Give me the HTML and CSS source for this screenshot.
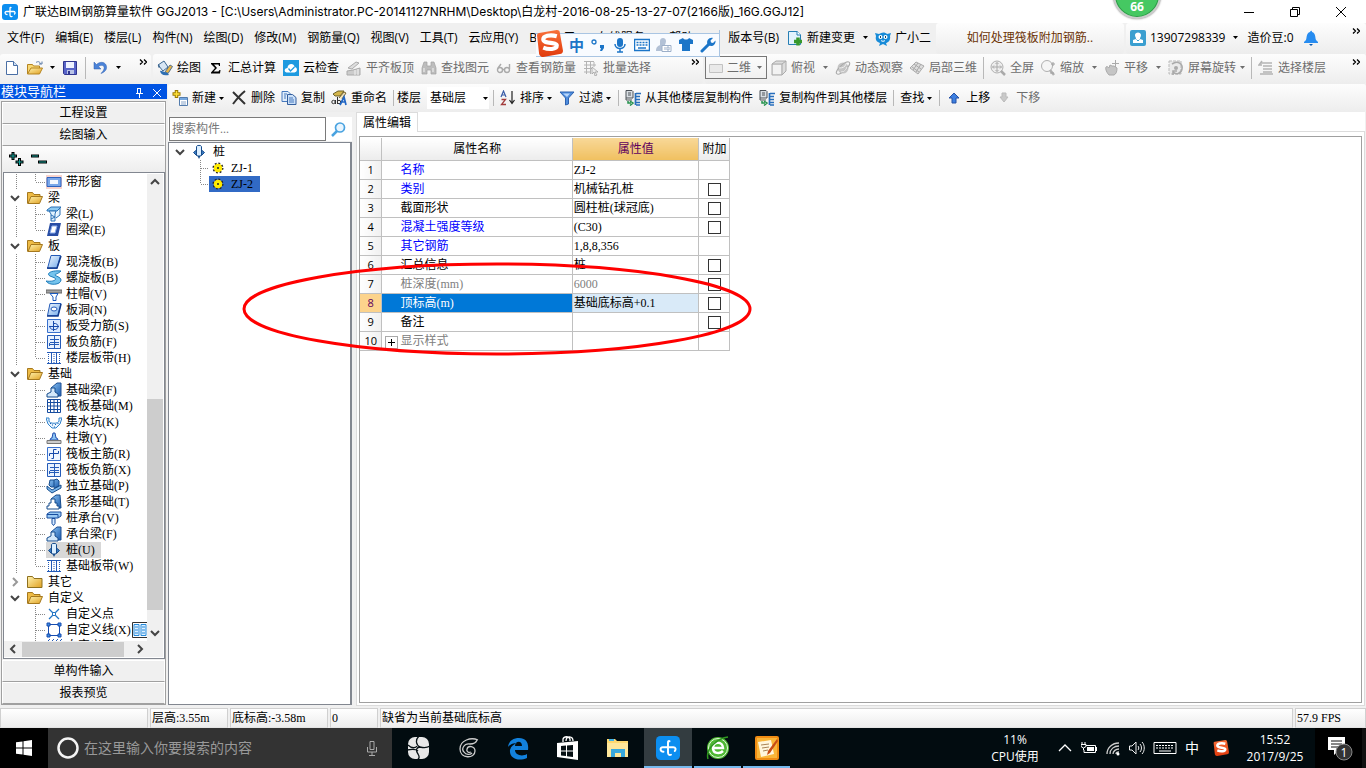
FILE: index.html
```html
<!DOCTYPE html>
<html lang="zh-CN">
<head>
<meta charset="utf-8">
<title>广联达BIM钢筋算量软件 GGJ2013</title>
<link rel="stylesheet" href="styles.css">
</head>
<body>
<svg class="defs" aria-hidden="true">
  <defs>
    <linearGradient id="gFold" x1="0" y1="0" x2="1" y2="1"><stop offset="0" stop-color="#fff3b0"/><stop offset="1" stop-color="#e0a020"/></linearGradient>
    <linearGradient id="gBlue" x1="0" y1="0" x2="1" y2="1"><stop offset="0" stop-color="#f4faff"/><stop offset="1" stop-color="#6fa8ea"/></linearGradient>
    <linearGradient id="gDeep" x1="0" y1="0" x2="1" y2="1"><stop offset="0" stop-color="#8cc4f4"/><stop offset="1" stop-color="#1c5cae"/></linearGradient>
    <linearGradient id="gSogou" x1="0" y1="0" x2="0" y2="1"><stop offset="0" stop-color="#f8703a"/><stop offset="1" stop-color="#e03a0c"/></linearGradient>
  </defs>
  <symbol id="caret" viewBox="0 0 5 3"><path d="M0 0h5L2.500 3z" fill="currentColor"/></symbol>
  <symbol id="more" viewBox="0 0 8 6"><path d="M1 .5 3.500 3 1 5.500M5 .5 7.500 3 5 5.500" fill="none" stroke="#000" stroke-width="1.300"/></symbol>
  <symbol id="app" viewBox="0 0 16 16"><rect width="16" height="16" rx="3" fill="#0c8ef0"/><path d="M9 3.500C8.300 3.200 8 3.500 8 4.500v6.500c0 1.500 1 2 2 1.500M5 10.500C2.500 10.500 2.500 7.500 4.500 7.500h7c1.700 0 2 1.500 1 2.500" fill="none" stroke="#fff" stroke-width="1.300" stroke-linecap="round"/></symbol>
  <symbol id="new" viewBox="0 0 16 16"><path d="M2.500 1.500h7l4 4v9h-11z" fill="#fff" stroke="#4a6fa5"/><path d="M9.500 1.500v4h4" fill="#cfe0f5" stroke="#4a6fa5"/></symbol>
  <symbol id="open" viewBox="0 0 16 16"><path d="M.5 14V4.500h5l1 1.500h6v3" fill="#f8d874" stroke="#b58420"/><path d="M.5 14 4 8h11.500l-3 6z" fill="url(#gFold)" stroke="#b58420"/><path d="M9 2.500c2-1.500 4-1 4.500 1.500M12 4h3V1.500" fill="none" stroke="#5b7ba8"/></symbol>
  <symbol id="save" viewBox="0 0 16 16"><path d="M1.500 1.500h13v13h-12l-1-1z" fill="#5864c8" stroke="#30358e"/><path d="M4 2h8v6H4z" fill="#eef2ff"/><path d="M5 10h7v4H5z" fill="#b9c3e6"/><path d="M6 11h2v3H6z" fill="#30358e"/></symbol>
  <symbol id="undo" viewBox="0 0 16 16"><path d="M1 2v7h7L5.500 6.500C9 4 12 6 11 9c-.5 2-2 3-3 4.500 4-1.500 6-4 5.500-7C13 2.500 8 .5 3.500 4.500z" fill="#4b83d8" stroke="#2e5fae" stroke-width=".5"/></symbol>
  <symbol id="paint" viewBox="0 0 16 16"><path d="M1 5 7 1l4 6-5 4z" fill="#d8e6f4" stroke="#3c6690"/><path d="M2 4c-2 3 0 5 1 3" fill="#3c6690"/><path d="m8 12 5-7 2.500 1.500-4.500 7-4 1z" fill="#e9b544" stroke="#55708c"/><path d="M3 11c2-1 4 2 7 1l2 3c-5 1-8 0-9-4z" fill="#2f6fb2"/></symbol>
  <symbol id="sigma" viewBox="0 0 16 16"><path d="M3 3h9v3h-1l-.5-1.500H6L9 8l-3.500 3.500h5L11.500 10h1l-.5 3.500H3v-1L7 8 3 4z" fill="#000"/></symbol>
  <symbol id="cloud" viewBox="0 0 16 16"><rect width="16" height="16" fill="#1d9ae0"/><path d="M3.500 12.500c-3-1-2-4.500 1-4.500 0-5 7-5 7-1 3 0 3.500 5 0 5.500z" fill="#fff"/><path d="m5.500 8.500 2 2.500 4-4" fill="none" stroke="#1d9ae0" stroke-width="1.300"/></symbol>
  <symbol id="flat" viewBox="0 0 16 16"><path d="m2 8 8-6 3 1-7 6z" fill="#ddd" stroke="#aaa"/><path d="M1 15v-4l6-1 7-2v7z" fill="#ccc" stroke="#aaa"/><path d="M9 10v5M12 9v6" stroke="#f2f2f2"/></symbol>
  <symbol id="binoc" viewBox="0 0 16 16"><path d="M3 2h3v4h4V2h3l2 6v6h-5v-4H6v4H1V8z" fill="#bdbdbd" stroke="#a2a2a2" stroke-width=".7"/><path d="M3 8v4M12 8v4" stroke="#f4f4f4"/></symbol>
  <symbol id="glasses" viewBox="0 0 16 16"><g fill="none" stroke="#aaa" stroke-width="1.400"><circle cx="4" cy="10" r="2.500"/><circle cx="11" cy="10" r="2.500"/><path d="M6.500 9.500h2M2 8l3-4M13.500 9V4"/></g></symbol>
  <symbol id="batch" viewBox="0 0 16 16"><path d="M1 1.500h10M1 5h12M1 8.500h8M1 12h7M3.500 1v13M7.500 1v13M11 2v5" fill="none" stroke="#b4b4b4"/><path d="m9 7 6 5h-3l2 3-2 1-1-4-2 2z" fill="#eee" stroke="#999" stroke-width=".7"/></symbol>
  <symbol id="rect2d" viewBox="0 0 16 16"><path d="M1.500 4.500h13v8h-13z" fill="#e9e9e9" stroke="#c2c2c2"/></symbol>
  <symbol id="cube" viewBox="0 0 16 16"><path d="m1 4 4-3h10v10l-4 4H1z" fill="#ddd" stroke="#aaa"/><path d="M1 4h10v11M11 4l4-3" fill="none" stroke="#aaa"/><path d="M2 5h8v9H2z" fill="#f2f2f2"/></symbol>
  <symbol id="orbit" viewBox="0 0 16 16"><circle cx="8" cy="8" r="5.500" fill="#c5c5c5"/><ellipse cx="8" cy="8" rx="8.500" ry="3" transform="rotate(-42 8 8)" fill="none" stroke="#aaa"/><path d="M4 8c4 0 6-1 7-4M6 12c3 0 5-2 6-5" fill="none" stroke="#eee"/></symbol>
  <symbol id="part3d" viewBox="0 0 16 16"><path d="m1 8 6-6 8 4-6 8z" fill="#ddd" stroke="#aaa"/><path d="m5 4 7 5M9 3l-5 7M12 4l-5 8M3 7l7 5" fill="none" stroke="#aaa"/></symbol>
  <symbol id="full" viewBox="0 0 16 16"><circle cx="7" cy="7" r="6" fill="#eee" stroke="#b0b0b0"/><path d="M7 2.500v9M2.500 7h9M5.500 4 7 2.500 8.500 4m-3 6L7 11.500 8.500 10M4 5.500 2.500 7 4 8.500m6-3L11.500 7 10 8.500" fill="none" stroke="#aaa"/><path d="m11 11 4 4" stroke="#aaa" stroke-width="2.500"/></symbol>
  <symbol id="zoom" viewBox="0 0 16 16"><circle cx="7" cy="6" r="5.500" fill="#f5f5f5" stroke="#b0b0b0"/><path d="m10 10 4 5" stroke="#b0b0b0" stroke-width="2.500"/><path d="M13 2v4M11 4h4M10 13h4" stroke="#a0a0a0"/></symbol>
  <symbol id="hand" viewBox="0 0 16 16"><path d="M2 7c1-1 2 0 3 1l1-3 2 1 2 0 3 2c0 4-1 6-3 7H5c-2-2-4-6-3-8z" fill="#c5c5c5" stroke="#aaa"/><path d="M11.500 0v7M8 3.500h7" stroke="#aaa"/></symbol>
  <symbol id="rotate" viewBox="0 0 16 16"><path d="M1 1h12v13H1z" fill="#eaeaea" stroke="#bbb" stroke-dasharray="3 1"/><path d="M4 4c6-4 11 0 10 5s-6 6-9 3m0 3v-4h4" fill="none" stroke="#aaa" stroke-width="1.600"/><circle cx="8" cy="8" r="2" fill="#aaa"/></symbol>
  <symbol id="floors" viewBox="0 0 16 16"><path d="M3 3h11M5 6h9M5 9h9M5 12h9M2 14h13M4 1 1 5h3" fill="none" stroke="#b4b4b4" stroke-width="1.500"/></symbol>
  <symbol id="change" viewBox="0 0 16 16"><path d="M1.500 1.500h9l3 3v10h-12z" fill="#e2f3fd" stroke="#267eb4"/><path d="M10 1v4h4" fill="#fff" stroke="#267eb4"/><path d="M11 7.500v8M7 11.500h8" stroke="#37992c" stroke-width="3.500"/></symbol>
  <symbol id="mascot" viewBox="0 0 16 16"><path d="M1 6 0 3l4 1c3-2 6-2 8 0l4-1-1 3c1 5-3 7-4 7l1 3-4-2-4 2 1-3c-3-1-5-3-4-7z" fill="#178bd8"/><circle cx="5.500" cy="7" r="2" fill="#fff"/><circle cx="10.500" cy="7" r="2" fill="#fff"/><path d="M5.500 6v2M10.500 6v2" stroke="#16435e"/><path d="M6 10.500c1 1 3 1 4 0" fill="none" stroke="#fff"/></symbol>
  <symbol id="user" viewBox="0 0 16 16"><rect width="16" height="16" rx="2" fill="#3b9fd0"/><path d="M5 5c0-3.500 6-3.500 6 0 0 2-1 2-1 4l3 1v3H3v-3l3-1c0-2-1-2-1-4z" fill="#fff"/><path d="m6.500 9.500 1.500 1.500 1.500-1.500" stroke="#3b9fd0" fill="none"/></symbol>
  <symbol id="bell" viewBox="0 0 16 16"><path d="M7 2c1-2 2-1 2 0 4 1 3 6 4 8l2 2v1H1v-1l2-2c1-2 0-7 4-8z" fill="#278cf0"/><path d="M6 14h4l-2 2z" fill="#0b5bb2"/></symbol>
  <symbol id="add" viewBox="0 0 16 16"><path d="M4.500 0v8M.5 4h8" stroke="#9a7900" stroke-width="3.500"/><path d="M4.500 1v6M1.500 4h6" stroke="#ffe13b" stroke-width="1.500"/><path d="M7.500 7.500h8v8h-8z" fill="#fff" stroke="#537cad"/><path d="M8 8h7v2H8z" fill="#76a8e0"/><path d="M9 12h5M9 14h5" stroke="#88a4c8"/></symbol>
  <symbol id="del" viewBox="0 0 16 16"><path d="m2 2 12 12M14 1C9 5 5 10 2 14" fill="none" stroke="#333" stroke-width="2"/></symbol>
  <symbol id="copy" viewBox="0 0 16 16"><path d="M1 1.500h6l3 3v7H1z" fill="#e0edfb" stroke="#4779bd"/><path d="M6.500 4.500h5l3.500 3v7H6.500z" fill="#cbe0f8" stroke="#345f9e"/><path d="M8 8h4M8 10h5M8 12h5M3 4h3M3 6h2M3 8h2" stroke="#4779bd"/></symbol>
  <symbol id="rename" viewBox="0 0 16 16"><path d="m2 4 5-3h6l-4 5H4z" fill="#d5b64b" stroke="#6c622b"/><path d="m8 8 5-6 2 1-4 6" fill="#eee3bd" stroke="#7a642d"/><g fill="none" stroke="#333"><circle cx="2.500" cy="12" r="1.700"/><path d="M4.500 10v4M6.500 7v7"/><circle cx="8" cy="12" r="1.700"/></g><path d="m9 15 4-8 2 8M11 12h4" fill="none" stroke="#2267c5" stroke-width="1.700"/></symbol>
  <symbol id="sort" viewBox="0 0 16 16"><path d="M1 7 3.500 1 6 7M2 5h3" fill="none" stroke="#3a5da8" stroke-width="1.200"/><path d="M1.500 9.500h4l-4 5h4.500" fill="none" stroke="#a33d3d" stroke-width="1.300"/><path d="M12 1v12m-2.500-3 2.500 3.500 2.500-3.500" fill="none" stroke="#222" stroke-width="1.200"/></symbol>
  <symbol id="filter" viewBox="0 0 16 16"><path d="M1 2h14l-5.500 6v6l-3 1V8z" fill="#4f8ede" stroke="#2d62b0"/><path d="M4 3.500h7L8 7z" fill="#b8d6fb"/></symbol>
  <symbol id="floorcopy" viewBox="0 0 16 16"><path d="M1 .5h6l1 1V8H1z" fill="#d9dee3" stroke="#4c5258"/><path d="M3 3h3M3 5h3M1 8v2h6" stroke="#4c5258" fill="none"/><path d="M3 11v2h3M5 11l3 2-3 2.500" fill="none" stroke="#25924d" stroke-width="1.500"/><path d="M11 3.500h5M11 6.500h4M11 9.500h4M11 12.500h4M11 15h4M10.500 3v12" fill="none" stroke="#276ebc" stroke-width="1.700"/></symbol>
  <symbol id="up" viewBox="0 0 16 16"><path d="m8 3 5 5h-3v5H6V8H3z" fill="#3d7fe0" stroke="#2450a4"/></symbol>
  <symbol id="down" viewBox="0 0 16 16"><path d="m8 12 4-5h-2V3H6v4H4z" fill="#c9c9c9" stroke="#bbb"/></symbol>
  <symbol id="chev" viewBox="0 0 10 10"><path d="m1 3 4 4 4-4" fill="none" stroke="currentColor" stroke-width="2"/></symbol>
  <symbol id="folder" viewBox="0 0 16 16"><path d="M.5 13.500v-11h5l1.500 2h6v3" fill="#eebb45" stroke="#a5781e"/><path d="m1 13.500 3-7h11.500l-3 7z" fill="url(#gFold)" stroke="#a5781e"/></symbol>
  <symbol id="folderc" viewBox="0 0 16 16"><path d="M.5 13.500v-11h5l1.500 2h8v9z" fill="url(#gFold)" stroke="#8e701e"/></symbol>
  <symbol id="win" viewBox="0 0 16 16"><path d="M0 1h16v14H0z" fill="#f8d3cc"/><path d="M1 3.500h14v9H1z" fill="#7ba7e8" stroke="#2d62c0"/><path d="M4 6h8v4H4z" fill="#f4f8ff"/></symbol>
  <symbol id="beam" viewBox="0 0 16 16"><path d="m1 4 4-3h10l-4 4H1z" fill="#8bc9f2" stroke="#2a70b5"/><path d="M3 5h7l-1 3v7H5V8zM11 5l3-3v7l-4 3" fill="#e1f2ff" stroke="#2a70b5"/><path d="m5 9 4 2-4 2" stroke="#2a70b5" fill="none"/></symbol>
  <symbol id="ring" viewBox="0 0 16 16"><path d="M4 1h11l-3 13H1z" fill="#284da4"/><path d="M6 4h5l-2 7H4z" fill="#fff" stroke="#8aacec"/></symbol>
  <symbol id="slab" viewBox="0 0 16 16"><path d="M5 1.500h9.500L11 14.500H1.500z" fill="url(#gBlue)" stroke="#245bb8"/><path d="M1 14h10l4-12" fill="none" stroke="#143d8e" stroke-width="1.500"/></symbol>
  <symbol id="spiral" viewBox="0 0 16 16"><path d="M15 1C4 0 0 4 4 6l5 2c2 2-2 4-9 3 3 5 15 4 15-1 0-3-6-4-6-5s3-1 6-4z" fill="#75c4ed" stroke="#1f7dbb"/></symbol>
  <symbol id="cap" viewBox="0 0 16 16"><path d="M0 4h16v3H0z" fill="#a2a2a2" stroke="#666"/><path d="M4 7.500h8L10 11v3.500H7V11z" fill="#fff" stroke="#1b59bd"/></symbol>
  <symbol id="hole" viewBox="0 0 16 16"><path d="M4 1.500h11L12 13.500H1.500z" fill="url(#gBlue)" stroke="#245bb8"/><path d="M1 14h11l3-12" fill="none" stroke="#143d8e" stroke-width="1.500"/><ellipse cx="8" cy="7" rx="3" ry="2" fill="#fff" stroke="#245bb8"/></symbol>
  <symbol id="rebar" viewBox="0 0 16 16"><path d="M1.500 1.500h13v13h-13z" fill="#d9e9ff" stroke="#3871ce"/><path d="M7.500 3v10M3 8.500h10M7.500 5.500c6-1 6 7 0 6-3 0-4-2-3-3" fill="none" stroke="#174aab"/></symbol>
  <symbol id="neg" viewBox="0 0 16 16"><path d="M1.500 1.500h13v13h-13z" fill="#e8f2ff" stroke="#245bb8"/><path d="M8.500 2v12M4 5.500h9M3 10.500h10M4 8.500h9M3.500 9v3" fill="none" stroke="#245bb8"/></symbol>
  <symbol id="strip" viewBox="0 0 16 16"><path d="M1 2.500h14M1 13.500h14M5.500 3v10M10.500 3v10" stroke="#245bb8"/><path d="M2.500 4v9M8 4v9M13.500 4v9" stroke="#245bb8" stroke-dasharray="1 1"/></symbol>
  <symbol id="fbeam" viewBox="0 0 16 16"><path d="m5 6 6-5h4v13h-4z" fill="url(#gDeep)" stroke="#1c4f94"/><path d="M5 6h4v4l3 2v3H1v-3l4-2z" fill="#d3e8fa" stroke="#174c8c"/></symbol>
  <symbol id="raft" viewBox="0 0 16 16"><path d="M1.500 1.500h13v13h-13z" fill="#fff" stroke="#174c9e"/><path d="M4.500 4.500h7v7h-7zM8 2v12M2 8h12M4.500 2v12M11.500 2v12M2 4.500h12M2 11.500h12" fill="none" stroke="#174c9e"/></symbol>
  <symbol id="pit" viewBox="0 0 16 16"><path d="M0 4h3v3c0 3 10 3 10 0V4h3l-2 6-4 4H6l-4-4z" fill="#e8f5ff" stroke="#3182cc"/><path d="M6 11h1M9 10.500h1M8 13h1M4 9.500h1M11.500 9.500h1" stroke="#1c5cae"/></symbol>
  <symbol id="pier" viewBox="0 0 16 16"><path d="M7 3h2l1 5h1l1 2H4l1-2h1z" fill="#8cc4f4" stroke="#2450ae"/><path d="M1 10.500h14v3H1z" fill="#ccc" stroke="#777"/></symbol>
  <symbol id="mrebar" viewBox="0 0 16 16"><path d="M1.500 1.500h13v13h-13z" fill="#eef5ff" stroke="#3871ce"/><path d="M7.500 3.500v9h-2M3.500 10V7.500h9V5M7.500 3.500h3" fill="none" stroke="#174aab"/></symbol>
  <symbol id="indep" viewBox="0 0 16 16"><path d="m1 8 5 4 9-5v3l-9 5-5-4z" fill="#7db8ec" stroke="#174c8c"/><path d="M4 2h4v7H5L3 7zM8 2l3-1 2 2v5l-5 2" fill="url(#gDeep)" stroke="#174c8c"/></symbol>
  <symbol id="stripf" viewBox="0 0 16 16"><path d="m5 5 5-4h4l1 13h-4z" fill="url(#gDeep)" stroke="#174c8c"/><path d="M5 5h4v4h2v3h2v3H1v-3h2V9h2z" fill="#fff" stroke="#174c8c"/></symbol>
  <symbol id="pcap" viewBox="0 0 16 16"><path d="M1 4 4 2h11v4l-3 2H1z" fill="#9bcaf5" stroke="#174c9e"/><path d="M1 4.500h11v3" fill="none" stroke="#174c9e"/><path d="M6 8.500h3v5l-1.500 2-1.500-2z" fill="#d8ebff" stroke="#174c9e"/></symbol>
  <symbol id="pile" viewBox="0 0 16 16"><path d="m2.500 8.500 3-2.500h5l3 2.500-3 3h-5z" fill="#3a7cc4" stroke="#174c8c"/><path d="M5.500 2.500c0-1.500 5-1.500 5 0V11l-1 1h-3l-1-1z" fill="#dcefff" stroke="#174c8c"/><path d="M6.500 12h3L8 15z" fill="#174c8c"/></symbol>
  <symbol id="point" viewBox="0 0 16 16"><path d="m3 3 10 10M13 3 3 13" stroke="#2375c5" stroke-width="1.300"/><path d="M6.500 6.500h3v3h-3z" fill="#fff" stroke="#2375c5"/></symbol>
  <symbol id="line" viewBox="0 0 16 16"><path d="M2.500 2.500h11v11h-11z" fill="#fff" stroke="#174cb0"/><path d="M1 1h3v3H1zM12 1h3v3h-3zM1 12h3v3H1zM12 12h3v3h-3z" fill="#3f8de0" stroke="#174cb0"/></symbol>
  <symbol id="hatch" viewBox="0 0 16 16"><path d="m0 5 4-4m0 4 4-4m0 4 4-4m0 4 4-4" stroke="#245bb8"/></symbol>
  <symbol id="pages" viewBox="0 0 16 16"><path d="M.5.500h15v15H.5z" fill="#fff" stroke="#333"/><path d="M2 2.500h5v11H2zM9 2.500h5v11H9z" fill="#dff0ff" stroke="#2489da"/><path d="M3 5h3M3 8h3M3 11h3M10 5h3M10 8h3M10 11h3" stroke="#2489da"/></symbol>
  <symbol id="gear" viewBox="0 0 16 16"><circle cx="8" cy="8" r="4" fill="#fff000"/><circle cx="8" cy="8" r="4.500" fill="none" stroke="#222" stroke-width="2" stroke-dasharray="1.800 1.700"/><circle cx="8" cy="8" r="3.500" fill="none" stroke="#ffe600" stroke-width="1.500"/><circle cx="8" cy="8" r="1" fill="#222"/></symbol>
  <symbol id="sogou" viewBox="0 0 26 26"><path d="M1 5Q1 3 3 3L20 0q3 0 3 3l3 17q0 3-3 3L7 26q-3 0-4-3z" fill="url(#gSogou)"/><path d="M20 6C13 4 7 6 7 9c0 5 13 2 13 6 0 4-8 4-13 2" fill="none" stroke="#fff" stroke-width="4"/></symbol>
</svg>

<header class="titlebar">
  <svg class="ic"><use href="#app"/></svg>
  <h1 class="title">广联达BIM钢筋算量软件 GGJ2013 - [C:\Users\Administrator.PC-20141127NRHM\Desktop\白龙村-2016-08-25-13-27-07(2166版)_16G.GGJ12]</h1>
  <div class="winctl">
    <button aria-label="最小化"><svg class="ic" viewBox="0 0 16 16"><path d="M3 8.500h10" stroke="#000"/></svg></button>
    <button aria-label="还原"><svg class="ic" viewBox="0 0 16 16"><path d="M3.500 5.500h7v7h-7zM5.500 5V3.500h7v7H11" fill="none" stroke="#000"/></svg></button>
    <button aria-label="关闭"><svg class="ic" viewBox="0 0 16 16"><path d="m3 3 10 10M13 3 3 13" stroke="#000"/></svg></button>
  </div>
</header>

<div class="menurow">
  <nav class="menu">
    <button>文件(F)</button><button>编辑(E)</button><button>楼层(L)</button><button>构件(N)</button><button>绘图(D)</button><button>修改(M)</button><button>钢筋量(Q)</button><button>视图(V)</button><button>工具(T)</button><button>云应用(Y)</button><button>BIM应用(I)</button><button>在线服务(S)</button><button>帮助(H)</button><button>版本号(B)</button>
  </nav>
  <div class="menuextra">
    <button class="tb"><svg class="ic"><use href="#change"/></svg>新建变更<svg class="caret"><use href="#caret"/></svg></button>
    <button class="tb"><svg class="ic"><use href="#mascot"/></svg>广小二</button>
  </div>
  <div class="band news"><a href="#">如何处理筏板附加钢筋..</a></div>
  <div class="band account">
    <button class="tb"><svg class="ic"><use href="#user"/></svg>13907298339<svg class="caret"><use href="#caret"/></svg></button>
    <span>造价豆:0</span>
    <button class="tb" aria-label="消息"><svg class="ic"><use href="#bell"/></svg></button>
    <svg class="more"><use href="#more"/></svg>
  </div>
</div>

<div class="toolrow">
  <div class="band files">
    <button class="tb" aria-label="新建"><svg class="ic"><use href="#new"/></svg></button>
    <button class="tb" aria-label="打开"><svg class="ic"><use href="#open"/></svg><svg class="caret"><use href="#caret"/></svg></button>
    <button class="tb" aria-label="保存"><svg class="ic"><use href="#save"/></svg></button>
    <i class="sep"></i>
    <button class="tb" aria-label="撤销"><svg class="ic"><use href="#undo"/></svg><svg class="caret"><use href="#caret"/></svg></button>
    <svg class="more"><use href="#more"/></svg>
  </div>
  <div class="band draw">
    <button class="tb"><svg class="ic"><use href="#paint"/></svg>绘图</button>
    <button class="tb"><svg class="ic"><use href="#sigma"/></svg>汇总计算</button>
    <button class="tb"><svg class="ic"><use href="#cloud"/></svg>云检查</button>
    <button class="tb off"><svg class="ic"><use href="#flat"/></svg>平齐板顶</button>
    <button class="tb off"><svg class="ic"><use href="#binoc"/></svg>查找图元</button>
    <button class="tb off"><svg class="ic"><use href="#glasses"/></svg>查看钢筋量</button>
    <button class="tb off"><svg class="ic"><use href="#batch"/></svg>批量选择</button>
    <svg class="more"><use href="#more"/></svg>
  </div>
  <div class="band view">
    <div class="combo dim"><svg class="ic"><use href="#rect2d"/></svg><select aria-label="视图维度" class="off"><option>二维</option></select><svg class="caret off"><use href="#caret"/></svg></div>
    <button class="tb off"><svg class="ic"><use href="#cube"/></svg>俯视<svg class="caret wide"><use href="#caret"/></svg></button>
    <button class="tb off"><svg class="ic"><use href="#orbit"/></svg>动态观察</button>
    <button class="tb off"><svg class="ic"><use href="#part3d"/></svg>局部三维</button>
    <i class="sep"></i>
    <button class="tb off"><svg class="ic"><use href="#full"/></svg>全屏</button>
    <button class="tb off"><svg class="ic"><use href="#zoom"/></svg>缩放<svg class="caret wide"><use href="#caret"/></svg></button>
    <button class="tb off"><svg class="ic"><use href="#hand"/></svg>平移<svg class="caret wide"><use href="#caret"/></svg></button>
    <button class="tb off"><svg class="ic"><use href="#rotate"/></svg>屏幕旋转<svg class="caret"><use href="#caret"/></svg></button>
    <i class="sep"></i>
    <button class="tb off"><svg class="ic"><use href="#floors"/></svg>选择楼层</button>
    <svg class="more"><use href="#more"/></svg>
  </div>
</div>

<main class="main">
  <aside class="nav">
    <div class="navhead"><h2>模块导航栏</h2>
      <button aria-label="固定"><svg class="ic" viewBox="0 0 16 16"><path d="M6.500 4v5M9.500 4v5M5 9.500h7M8.500 10v4M6 4.500h4" stroke="#fff" fill="none"/></svg></button>
      <button aria-label="关闭"><svg class="ic" viewBox="0 0 16 16"><path d="m4 5 8 8M12 5l-8 8" stroke="#fff"/></svg></button>
    </div>
    <div class="navbody">
      <button class="navbtn">工程设置</button>
      <button class="navbtn">绘图输入</button>
      <div class="navtools">
        <button aria-label="全部展开"><svg class="ic" viewBox="0 0 16 16"><path d="M5 0v8M1 4h8M11.500 6v8M7.500 10h8" stroke="#000" stroke-width="3"/><path d="M5 1v6M2 4h6M11.500 7v6M8.500 10h6" stroke="#16a098"/></svg></button>
        <button aria-label="全部折叠"><svg class="ic" viewBox="0 0 16 16"><path d="M0 4h8M7 10h9" stroke="#000" stroke-width="3"/><path d="M1 4h6M8 10h7" stroke="#16a098"/></svg></button>
      </div>
      <div class="treebox">
        <ul class="tree">
          <li class="leaf last"><svg class="ic"><use href="#win"/></svg><span>带形窗</span></li>
          <li class="node"><svg class="chev"><use href="#chev"/></svg><svg class="ic"><use href="#folder"/></svg><span>梁</span></li>
          <li class="leaf"><svg class="ic"><use href="#beam"/></svg><span>梁(L)</span></li>
          <li class="leaf last"><svg class="ic"><use href="#ring"/></svg><span>圈梁(E)</span></li>
          <li class="node"><svg class="chev"><use href="#chev"/></svg><svg class="ic"><use href="#folder"/></svg><span>板</span></li>
          <li class="leaf"><svg class="ic"><use href="#slab"/></svg><span>现浇板(B)</span></li>
          <li class="leaf"><svg class="ic"><use href="#spiral"/></svg><span>螺旋板(B)</span></li>
          <li class="leaf"><svg class="ic"><use href="#cap"/></svg><span>柱帽(V)</span></li>
          <li class="leaf"><svg class="ic"><use href="#hole"/></svg><span>板洞(N)</span></li>
          <li class="leaf"><svg class="ic"><use href="#rebar"/></svg><span>板受力筋(S)</span></li>
          <li class="leaf"><svg class="ic"><use href="#neg"/></svg><span>板负筋(F)</span></li>
          <li class="leaf last"><svg class="ic"><use href="#strip"/></svg><span>楼层板带(H)</span></li>
          <li class="node"><svg class="chev"><use href="#chev"/></svg><svg class="ic"><use href="#folder"/></svg><span>基础</span></li>
          <li class="leaf"><svg class="ic"><use href="#fbeam"/></svg><span>基础梁(F)</span></li>
          <li class="leaf"><svg class="ic"><use href="#raft"/></svg><span>筏板基础(M)</span></li>
          <li class="leaf"><svg class="ic"><use href="#pit"/></svg><span>集水坑(K)</span></li>
          <li class="leaf"><svg class="ic"><use href="#pier"/></svg><span>柱墩(Y)</span></li>
          <li class="leaf"><svg class="ic"><use href="#mrebar"/></svg><span>筏板主筋(R)</span></li>
          <li class="leaf"><svg class="ic"><use href="#neg"/></svg><span>筏板负筋(X)</span></li>
          <li class="leaf"><svg class="ic"><use href="#indep"/></svg><span>独立基础(P)</span></li>
          <li class="leaf"><svg class="ic"><use href="#stripf"/></svg><span>条形基础(T)</span></li>
          <li class="leaf"><svg class="ic"><use href="#pcap"/></svg><span>桩承台(V)</span></li>
          <li class="leaf"><svg class="ic"><use href="#fbeam"/></svg><span>承台梁(F)</span></li>
          <li class="leaf current"><svg class="ic"><use href="#pile"/></svg><span>桩(U)</span></li>
          <li class="leaf last"><svg class="ic"><use href="#strip"/></svg><span>基础板带(W)</span></li>
          <li class="node"><svg class="chev closed"><use href="#chev"/></svg><svg class="ic"><use href="#folderc"/></svg><span>其它</span></li>
          <li class="node"><svg class="chev"><use href="#chev"/></svg><svg class="ic"><use href="#folder"/></svg><span>自定义</span></li>
          <li class="leaf tail"><svg class="ic"><use href="#point"/></svg><span>自定义点</span></li>
          <li class="leaf tail"><svg class="ic"><use href="#line"/></svg><span>自定义线(X)</span><svg class="ic"><use href="#pages"/></svg></li>
          <li class="leaf tail"><svg class="ic"><use href="#hatch"/></svg><span>自定义面</span></li>
        </ul>
        <div class="vscroll"><svg class="chev upw"><use href="#chev"/></svg><div class="track"><div class="thumb"></div></div><svg class="chev"><use href="#chev"/></svg></div>
        <div class="hscroll"><svg class="chev leftw"><use href="#chev"/></svg><div class="track"><div class="thumb"></div></div><svg class="chev rightw"><use href="#chev"/></svg></div>
      </div>
      <button class="navbtn">单构件输入</button>
      <button class="navbtn">报表预览</button>
    </div>
  </aside>

  <section class="work">
    <div class="band comp">
      <button class="tb"><svg class="ic"><use href="#add"/></svg>新建<svg class="caret"><use href="#caret"/></svg></button>
      <button class="tb"><svg class="ic"><use href="#del"/></svg>删除</button>
      <button class="tb"><svg class="ic"><use href="#copy"/></svg>复制</button>
      <button class="tb"><svg class="ic"><use href="#rename"/></svg>重命名</button>
      <i class="sep"></i>
      <label for="floor" class="floorlabel">楼层</label>
      <div class="combo floor"><select id="floor"><option>基础层</option></select><svg class="caret"><use href="#caret"/></svg></div>
      <i class="sep"></i>
      <button class="tb"><svg class="ic"><use href="#sort"/></svg>排序<svg class="caret"><use href="#caret"/></svg></button>
      <button class="tb"><svg class="ic"><use href="#filter"/></svg>过滤<svg class="caret"><use href="#caret"/></svg></button>
      <i class="sep"></i>
      <button class="tb"><svg class="ic"><use href="#floorcopy"/></svg>从其他楼层复制构件</button>
      <button class="tb"><svg class="ic"><use href="#floorcopy"/></svg>复制构件到其他楼层</button>
      <i class="sep"></i>
      <button class="tb">查找<svg class="caret"><use href="#caret"/></svg></button>
      <i class="sep"></i>
      <button class="tb"><svg class="ic"><use href="#up"/></svg>上移</button>
      <button class="tb off"><svg class="ic"><use href="#down"/></svg>下移</button>
    </div>
    <div class="split">
      <div class="complist">
        <div class="search"><input type="text" placeholder="搜索构件..." aria-label="搜索构件"><button aria-label="搜索"><svg class="ic" viewBox="0 0 16 16"><circle cx="9" cy="6.500" r="4.500" fill="#e8f5ff" stroke="#4aa3e0" stroke-width="1.700"/><path d="m6 10-5 5" stroke="#4aa3e0" stroke-width="2.500"/></svg></button></div>
        <ul class="ctree">
          <li class="croot"><svg class="chev"><use href="#chev"/></svg><svg class="ic"><use href="#pile"/></svg><span>桩</span></li>
          <li class="cleaf"><div><svg class="ic"><use href="#gear"/></svg><span>ZJ-1</span></div></li>
          <li class="cleaf last"><div class="sel"><svg class="ic"><use href="#gear"/></svg><span>ZJ-2</span></div></li>
        </ul>
      </div>
      <div class="props">
        <div class="tabs"><button class="tab">属性编辑</button></div>
        <div class="page"><div class="grid">
          <table>
            <colgroup><col class="c0"><col class="c1"><col class="c2"><col class="c3"></colgroup>
            <thead><tr><th></th><th>属性名称</th><th class="hot">属性值</th><th>附加</th></tr></thead>
            <tbody>
              <tr><th>1</th><td class="name key">名称</td><td>ZJ-2</td><td></td></tr>
              <tr><th>2</th><td class="name key">类别</td><td>机械钻孔桩</td><td class="ck"><input type="checkbox" aria-label="附加 类别"></td></tr>
              <tr><th>3</th><td class="name">截面形状</td><td>圆柱桩(球冠底)</td><td class="ck"><input type="checkbox" aria-label="附加 截面形状"></td></tr>
              <tr><th>4</th><td class="name key">混凝土强度等级</td><td>(C30)</td><td class="ck"><input type="checkbox" aria-label="附加 混凝土强度等级"></td></tr>
              <tr><th>5</th><td class="name key">其它钢筋</td><td>1,8,8,356</td><td></td></tr>
              <tr><th>6</th><td class="name">汇总信息</td><td>桩</td><td class="ck"><input type="checkbox" aria-label="附加 汇总信息"></td></tr>
              <tr class="dimrow"><th>7</th><td class="name">桩深度(mm)</td><td>6000</td><td class="ck"><input type="checkbox" aria-label="附加 桩深度"></td></tr>
              <tr class="active"><th>8</th><td class="name">顶标高(m)</td><td>基础底标高+0.1</td><td class="ck"><input type="checkbox" aria-label="附加 顶标高"></td></tr>
              <tr><th>9</th><td class="name">备注</td><td></td><td class="ck"><input type="checkbox" aria-label="附加 备注"></td></tr>
              <tr class="dimrow"><th>10</th><td class="exp"><button aria-label="展开"><svg viewBox="0 0 11 11"><path d="M2 5.500h7M5.500 2v7" stroke="#000"/></svg></button>显示样式</td><td></td><td></td></tr>
            </tbody>
          </table>
        </div></div>
      </div>
    </div>
  </section>
</main>

<footer class="status">
  <span class="s0"></span><span class="s1">层高:3.55m</span><span class="s2">底标高:-3.58m</span><span class="s3">0</span><span class="s4">缺省为当前基础底标高</span><span class="s5">57.9 FPS</span>
</footer>

<div class="taskbar">
  <button class="start" aria-label="开始"><svg class="ic" viewBox="0 0 16 16"><path d="M0 2.300 6.500 1.400v6H0zM7.500 1.200 16 0v7.400H7.500zM0 8.500h6.500v6L0 13.700zM7.500 8.500H16V16l-8.500-1.200z" fill="#fff"/></svg></button>
  <div class="cortana"><svg class="big" viewBox="0 0 24 24"><circle cx="12" cy="12" r="9.500" fill="none" stroke="#f4f4f4" stroke-width="2.500"/></svg><input type="text" placeholder="在这里输入你要搜索的内容" aria-label="搜索"><svg class="ic" viewBox="0 0 16 16"><path d="M6 1.500h4v8H6zM3.500 7v5h9V7M8 12v3M5 15.500h6" fill="none" stroke="#aaa"/></svg></div>
  <div class="apps">
    <button aria-label="应用"><svg class="big" viewBox="0 0 24 24"><rect x="2" y="1" width="21" height="22" rx="7" fill="#e8e8e8"/><path d="M13 0c-4 4-3 9 1 11 4 1 7 1 10-1M14 11c-3 0-5 3-2 7 2 3 1 5-1 6M12 15c-2-2-5-2-11-1M2 9c4 4 8 3 9 1" fill="none" stroke="#061014" stroke-width="1.300"/></svg></button>
    <button aria-label="浏览器"><svg class="big" viewBox="0 0 24 24"><path d="M22 4C15 1 4 4 4 13c0 10 15 10 15 2 0-5-7-6-8-2-1 3 2 4 4 3M21 4c-1 3-4 4-7 4-6-1-9 5-6 8 2 3 6 3 8 1" fill="none" stroke="#ccc" stroke-width="1.300"/></svg></button>
    <button aria-label="Edge"><svg class="big" viewBox="0 0 24 24"><path d="M2 11C3 4 8 2 13 2c7 0 10 5 9 12H9c0 5 7 7 12 4v4C12 26 3 22 4 14c1-4 4-6 7-7-6 0-8 3-9 4zm7-1h7c0-6-7-5-7 0z" fill="#1281dc"/></svg></button>
    <button aria-label="应用商店"><svg class="big" viewBox="0 0 24 24"><path d="m1 7 21-2v19L1 21z" fill="#fff"/><path d="M7 6V3c1-3 6-3 7 0v2M10 5c0-6 7-5 7 0" fill="none" stroke="#fff" stroke-width="1.300"/><path d="m5 10 5-.5v5H5zM11 9.500l6-.5v5.500h-6zM5 15.500h5v4.500l-5-.5zM11 15.500h6v5.500l-6-.8z" fill="#061014"/></svg></button>
    <button aria-label="文件资源管理器"><svg class="big" viewBox="0 0 24 24"><path d="M1 3h8l2 2h11v16H1z" fill="#ffd970"/><path d="M3 3h5v2H3z" fill="#3fb1e6"/><path d="M1 7h21v14H1z" fill="#ffe79b"/><path d="M5 21v-8h14v8h-4v-4H9v4z" fill="#38a8dd"/></svg></button>
    <button class="on" aria-label="广联达"><svg class="big"><use href="#app"/></svg></button>
    <button class="run" aria-label="360浏览器"><svg class="big" viewBox="0 0 24 24"><circle cx="12" cy="12" r="11" fill="#4fb934"/><circle cx="12" cy="12" r="9.500" fill="none" stroke="#e5f7df"/><path d="M7 12h10c0-7-10-7-10 0 0 6 7 6 10 3" fill="none" stroke="#fff" stroke-width="2.500"/><path d="M2 23C-1 12 13 2 22 1" stroke="#2f9620" stroke-width="1.500" fill="none"/></svg></button>
    <button class="run" aria-label="写字板"><svg class="big" viewBox="0 0 24 24"><rect width="24" height="24" rx="2" fill="#f08c13"/><path d="M2 2h20v20H2z" fill="#f9b538"/><path d="m3 6 13-2 3 14-13 3z" fill="#fff6dc"/><path d="m6 9 8-1M7 12l7-1M8 15l5-1" stroke="#a98355"/><path d="m22 3-9 12-1 4 3-2 8-12z" fill="#c74b15"/></svg></button>
  </div>
  <div class="cpu"><span>11%</span><span>CPU使用</span></div>
  <div class="tray">
    <svg class="ic" viewBox="0 0 16 16"><path d="m2 11 6-6 6 6" fill="none" stroke="#fff" stroke-width="1.300"/></svg>
    <svg class="ic" viewBox="0 0 16 16"><path d="M5 5.500h9.500v7H3V10M1 2v2M4 2v2M0 4.500h5v2L2.500 8 0 6.500zM2.500 8v2" fill="none" stroke="#fff"/><path d="M6 7h7v4H6zM15 7h1v4h-1z" fill="#fff"/></svg>
    <svg class="ic" viewBox="0 0 16 16"><path d="M2 14C2 8 7 3 14 3M5 14c0-5 4-8 9-8M8 14c0-3 3-5 6-5M11 14c0-1 1-2 3-2" fill="none" stroke="#ccc" stroke-width="1.300"/><circle cx="13" cy="14" r="1.500" fill="#fff"/></svg>
    <svg class="ic" viewBox="0 0 16 16"><path d="M.5 6v4H3l4 4V2L3 6zM9 6c1 1 1 3 0 4M11 4c2 2 2 6 0 8M13 2c3 3 3 9 0 12" fill="none" stroke="#eee"/></svg>
    <svg class="kbd" viewBox="0 0 24 16"><path d="M1 2.500h22v11H1z" fill="none" stroke="#fff"/><path d="M3 5.500h18M3 8h18" stroke="#fff" stroke-dasharray="2 1"/><path d="M6 11h12" stroke="#fff"/></svg>
    <span class="ime">中</span>
    <svg class="ic"><use href="#sogou"/></svg>
  </div>
  <div class="clock"><span>15:52</span><span>2017/9/25</span></div>
  <button class="notice" aria-label="通知"><svg viewBox="0 0 28 28"><path d="M3 3h17v13h-6l-5 5v-5H3z" fill="#fff"/><path d="M6 7h11M6 10h11M6 13h8" stroke="#111"/><circle cx="19" cy="18" r="8" fill="#333" stroke="#888"/></svg><b>1</b></button>
</div>

<div class="imebar">
  <svg class="logo"><use href="#sogou"/></svg>
  <b>中</b>
  <svg class="ic" viewBox="0 0 16 16"><circle cx="4" cy="5" r="2" fill="none" stroke="#1b75c8" stroke-width="1.300"/><path d="M10 8h4v3l-2 3h-2l1-3h-1z" fill="#1b75c8"/></svg>
  <svg class="ic" viewBox="0 0 16 16"><rect x="5" y="1" width="6" height="9" rx="3" fill="#1b75c8"/><path d="M3 7c0 6 10 6 10 0M8 12v3M5 15h6" fill="none" stroke="#1b75c8" stroke-width="1.500"/></svg>
  <svg class="ic" viewBox="0 0 16 16"><path d="M.5 2.500h15v11H.5z" fill="#fff" stroke="#1b75c8" stroke-width="1.500"/><path d="M2.500 5.500h11M2.500 8h11" stroke="#1b75c8" stroke-width="1.500" stroke-dasharray="2 1"/><path d="M4 11h8" stroke="#1b75c8" stroke-width="1.500"/></svg>
  <svg class="ic" viewBox="0 0 16 16"><path d="M4 4c0-4 6-4 6 0 0 2-1 3-1 4l3 2v4H0c0-4 2-5 4-6z" fill="#b2c1d6"/><path d="M6 8.500h9v6H6z" fill="#fff" stroke="#9cafc9"/><path d="M9 10v3M11 10h2v3h-2z" stroke="#9cafc9" fill="none"/></svg>
  <svg class="ic" viewBox="0 0 16 16"><path d="M1 3 5 1c1 2 5 2 6 0l4 2v4h-3v7H4V7H1z" fill="#1b75c8"/></svg>
  <svg class="ic" viewBox="0 0 16 16"><path d="m2 14 7-7" stroke="#1b75c8" stroke-width="3" stroke-linecap="round"/><path d="M13 1 10.500 3.500l.5 2 2 .5L15.500 3.500C16 8 12 10 9 8.500L7.500 7C6 4 9 0 13 1z" fill="#1b75c8"/></svg>
</div>
<div class="ball">66</div>
<svg class="mark" viewBox="0 0 510 96"><ellipse cx="255" cy="48" rx="253" ry="45" fill="none" stroke="#f00" stroke-width="3"/></svg>
</body>
</html>
```
FILE: styles.css
```css
* { box-sizing: border-box; }
body {
  margin: 0;
  height: 100vh;
  display: flex;
  flex-direction: column;
  position: relative;
  overflow: hidden;
  background: #f0f0f0;
  color: #000;
  font: 12px/16px "Open Sans", "Noto Sans CJK SC", sans-serif;
}
button, input, select { font: inherit; color: inherit; }
button { border: 0; padding: 0; background: none; white-space: nowrap; }
ul { list-style: none; margin: 0; padding: 0; }
svg { display: block; flex: none; }
.defs { position: absolute; width: 0; height: 0; }
.ic { width: 16px; height: 16px; }
.big { width: 24px; height: 24px; }
.caret { width: 5px; height: 3px; }
.more { width: 8px; height: 6px; align-self: flex-start; margin-left: auto; margin-top: 5px; }
.off { color: #6d6d6d; }

/* title bar */
.titlebar { height: 23px; flex: none; display: flex; align-items: center; gap: 5px; padding-left: 2px; background: #fff; }
.title { margin: 0; flex: 1; font: 12px/16px Inter, "Noto Sans CJK SC", sans-serif; white-space: nowrap; }
.winctl { display: flex; gap: 30px; padding-right: 17px; }

/* menu and tool rows */
.menurow, .toolrow { flex: none; display: flex; gap: 2px; white-space: nowrap; }
.menurow { height: 31px; }
.toolrow { height: 30px; }
.menu { display: flex; align-items: center; gap: 11px; padding: 0 0 2px 7px; width: 779px; }
.menu :last-child { margin-left: auto; }
.menuextra { display: flex; align-items: center; gap: 7px; padding: 0 0 2px 6px; width: 153px; }
.band { display: flex; align-items: center; background: linear-gradient(#fdfdfd, #ededed); border-radius: 3px; }
.tb { display: flex; align-items: center; gap: 4px; height: 22px; }
.menuextra .caret { margin-left: 4px; }
.menurow .band { padding-bottom: 2px; }
.news { width: 188px; justify-content: center; }
.news a { color: #6b3305; text-decoration: none; }
.account { flex: 1; padding: 0 6px 0 4px; gap: 9px; }
.account .caret { margin-left: 4px; }
.sep { width: 1px; height: 22px; background: #b8b8b8; flex: none; }
.toolrow .band { padding-bottom: 3px; }
.files { width: 151px; padding: 0 4px; gap: 7px; }
.files .caret { margin-left: 3px; }
.draw { width: 550px; padding: 0 4px; gap: 7px; }
.view { flex: 1; padding: 0 6px 0 0; gap: 6px; }
.caret.wide { margin: 0 1px 0 4px; }
.combo { display: flex; align-items: center; }
.combo select { appearance: none; border: 0; padding: 0; background: none; flex: 1; }
.dim { width: 62px; height: 23px; border: 1px solid #777; padding: 0 4px 0 2px; gap: 3px; margin-right: -2px; }

/* main */
.main { flex: 1; min-height: 0; display: flex; }
.nav { width: 167px; flex: none; display: flex; flex-direction: column; font-family: "Liberation Serif", "Noto Sans CJK SC", serif; }
.navhead { display: flex; align-items: center; height: 15px; background: #0054e3; color: #fff; padding: 0 2px 0 1px; gap: 2px; }
.navhead h2 { margin: 0; flex: 1; font-size: 13px; font-weight: 400; line-height: 15px; }
.navbody { flex: 1; min-height: 0; display: flex; flex-direction: column; margin: 2px 1px 2px; border: 1px solid #a0a0a0; }
.navbtn { height: 22px; flex: none; border: 1px solid #fff; border-bottom-color: #a0a0a0; background: #f0f0f0; }
.navtools { height: 26px; flex: none; display: flex; align-items: center; gap: 7px; padding: 2px 6px 0; background: linear-gradient(#fdfdfd, #ededed); }
.treebox { flex: 1; min-height: 0; border: 1px solid #828790; margin: 0 0 1px 1px; background: #fff; padding: 1px 1px 1px 0; display: grid; grid-template: minmax(0, 1fr) 16px / minmax(0, 1fr) 16px; }
.tree { overflow: hidden; }
.tree li { height: 16px; display: flex; align-items: center; white-space: nowrap; }
.node { padding-left: 6px; }
.node .ic { margin: 0 5px 0 7px; }
.chev { width: 10px; height: 10px; color: #444; }
.closed { transform: rotate(-90deg); color: #999; }
.leaf {
  --v: repeating-linear-gradient(#888 0 1px, transparent 1px 2px);
  padding-left: 42px;
  background: var(--v) 12px 0 / 1px 16px no-repeat, var(--v) 31px 0 / 1px 16px no-repeat,
    repeating-linear-gradient(90deg, #888 0 1px, transparent 1px 2px) 32px 8px / 10px 1px no-repeat;
}
.leaf.last { background-size: 1px 16px, 1px 8px, 10px 1px; }
.leaf.tail { background-size: 0 0, 1px 16px, 10px 1px; }
.leaf span { padding: 0 1px 0 4px; }
.current .ic, .current span { background: #d8d8d8; }
.current span { padding-right: 6px; }
.vscroll, .hscroll { display: flex; align-items: center; background: #f0f0f0; }
.vscroll { flex-direction: column; padding: 3px 0; }
.vscroll .track { flex: 1; width: 100%; display: flex; flex-direction: column; justify-content: flex-end; padding-bottom: 18px; }
.vscroll .thumb { height: 50%; background: #cdcdcd; }
.hscroll { grid-column: 1 / 3; padding: 0 18px 0 4px; gap: 4px; }
.hscroll .track { flex: 1; height: 15px; display: flex; }
.hscroll .thumb { width: 94%; background: #cdcdcd; }
.upw { transform: rotate(180deg); }
.leftw { transform: rotate(90deg); }
.rightw { transform: rotate(-90deg); }

/* work area */
.work { flex: 1; min-width: 0; display: flex; flex-direction: column; padding-left: 1px; }
.comp { height: 28px; flex: none; padding: 0 4px; gap: 6px; white-space: nowrap; }
.comp .sep { height: 16px; }
.comp .caret { margin-left: -1px; margin-right: 1px; }
.floorlabel { margin-left: -3px; }
.floor { width: 62px; height: 22px; background: #fff; padding-left: 3px; margin-right: -2px; }
.split { flex: 1; min-height: 0; display: flex; gap: 4px; font-family: "Liberation Serif", "Noto Sans CJK SC", serif; }
.complist { width: 184px; flex: none; display: flex; flex-direction: column; padding: 5px 0 2px; }
.search { display: flex; height: 24px; background: #fff; flex: none; padding-left: 1px; }
.search input { width: 157px; border: 1px solid #7a7a7a; padding: 0 2px; outline: 0; }
.search button { flex: 1; display: flex; align-items: center; justify-content: center; }
.search input::placeholder { color: #777; }
.ctree { flex: 1; border: 1px solid #828790; border-right-width: 2px; background: #fff; margin-top: 1px; padding: 1px 0 0 6px; }
.croot, .cleaf div { display: flex; align-items: center; height: 16px; gap: 5px; }
.croot { gap: 6px; }
.cleaf { display: flex; padding-left: 34px; background: repeating-linear-gradient(#888 0 1px, transparent 1px 2px) 25px 0 / 1px 16px no-repeat, repeating-linear-gradient(90deg, #888 0 1px, transparent 1px 2px) 26px 8px / 8px 1px no-repeat; }
.cleaf.last { background-size: 1px 8px, 8px 1px; }
.cleaf div { padding: 0 4px 0 1px; width: 51px; }
.cleaf .sel { background: #316ac5; }
.props { flex: 1; min-width: 0; display: flex; flex-direction: column; padding: 0 1px 1px 0; }
.tabs { display: flex; height: 20px; border-bottom: 1px solid #dcdcdc; background: #fff; }
.tab { height: 20px; padding: 0 6px; border: 1px solid #dcdcdc; border-bottom: 0; background: #fff; }
.page { flex: 1; min-height: 0; display: flex; padding: 4px 2px 2px; background: #fff; border: 1px solid #dcdcdc; border-top: 0; }
.grid { flex: 1; border: 1px solid #a0a0a0; background: #fff; padding: 1px 0; }
table { border-collapse: collapse; table-layout: fixed; width: 370px; }
.c0 { width: 21px; }
.c1 { width: 191px; }
.c2 { width: 126px; }
.c3 { width: 31px; }
th, td { height: 19px; border: 1px solid #c0c0c0; padding: 1px 0 0 1px; line-height: 16px; font-weight: 400; text-align: left; white-space: nowrap; }
tr > :first-child { border-left: 0; }
thead th { height: 22px; border-top: 0; }
th { background: linear-gradient(90deg, #fff, #f0f0f0); text-align: center; font-family: "Open Sans", "Noto Sans CJK SC", sans-serif; }
tbody th { font-size: 11px; }
thead th { background: linear-gradient(#fff, #ececec); }
thead .hot { background: linear-gradient(#f8d898, #f0c060); color: #5e005e; }
.name { padding-left: 19px; }
.key { color: #00f; }
.dimrow td { color: #808080; }
.active th { background: #fcd38c; color: #5e005e; }
.active td:nth-child(2) { background: #0078d7; color: #fff; }
.active td:nth-child(3) { background: #d9eaf8; }
.ck { text-align: center; }
.ck input { appearance: none; display: block; width: 13px; height: 13px; margin: 0 auto; border: 1px solid #333; background: #fff; }
.exp button { display: inline-block; vertical-align: middle; width: 13px; height: 13px; border: 1px solid #aaa; background: #fff; margin: 0 3px 0 2px; }
.exp svg { width: 11px; height: 11px; }

/* status bar */
.status { flex: none; height: 21px; display: flex; gap: 2px; font-family: "Liberation Serif", "Noto Sans CJK SC", serif; white-space: nowrap; }
.status span { border: 1px solid #d0d0d0; border-bottom-color: #e4e4e4; background: linear-gradient(#fff, #ededed); padding: 1px 1px 0; height: 20px; margin-top: 1px; }
.s0 { width: 148px; }
.s1 { width: 78px; }
.s2 { width: 98px; }
.s3 { width: 48px; }
.s4 { flex: 1; }
.s5 { width: 71px; }

/* taskbar */
.taskbar { flex: none; height: 40px; display: flex; align-items: stretch; background: #020c10; color: #fff; }
.start { width: 48px; display: flex; align-items: center; justify-content: center; background: #000; }
.cortana { width: 344px; display: flex; align-items: center; gap: 4px; padding: 0 12px 0 8px; background: #333; }
.cortana input { flex: 1; min-width: 0; border: 0; background: none; font-size: 14px; outline: 0; padding: 0; }
.cortana input::placeholder { color: #999; }
.apps { display: flex; gap: 2px; padding-left: 2px; flex: 1; }
.apps button { width: 48px; display: flex; align-items: center; justify-content: center; border-bottom: 2px solid transparent; border-top: 2px solid transparent; }
.apps .on { background: #333c40; border-bottom-color: #76b9ed; border-top-color: #333c40; }
.apps .run { border-bottom-color: #76b9ed; width: 47px; }
.cpu, .clock { display: flex; flex-direction: column; align-items: center; justify-content: center; line-height: 17px; }
.cpu { width: 60px; }
.tray { display: flex; align-items: center; gap: 8px; padding: 0 6px 0 12px; }
.kbd { width: 24px; height: 16px; }
.ime { font-size: 14px; }
.tray .ime { margin-right: 6px; }
.clock { width: 80px; }
.notice { width: 51px; background: #000; position: relative; display: flex; justify-content: center; align-items: center; border-right: 4px solid #111; }
.notice svg { width: 28px; height: 28px; }
.notice b { position: absolute; left: 24px; top: 17px; width: 10px; text-align: center; font-weight: 400; }

/* floating overlays */
.imebar { position: absolute; left: 536px; top: 30px; width: 184px; height: 27px; display: flex; align-items: center; gap: 6px; color: #1b75c8; background: linear-gradient(transparent 3px, #a9c5e3 3px 4px, #f8fbff 4px 26px, #a9c5e3 26px); border-right: 1px solid #a9c5e3; }
.imebar .logo { width: 27px; height: 27px; }
.imebar b { font-size: 15px; margin-top: 2px; }
.imebar .ic { margin-top: 2px; }
.ball { position: absolute; left: 1113px; top: -29px; width: 48px; height: 48px; border-radius: 50%; border: 2px solid #ccc; background: #45c862; box-shadow: inset 0 0 0 1px #2f9a4a, 0 0 2px #888; color: #fff; font-weight: 700; text-align: center; line-height: 12px; padding-top: 28px; }
.mark { position: absolute; left: 242px; top: 261px; width: 510px; height: 96px; pointer-events: none; }
```
